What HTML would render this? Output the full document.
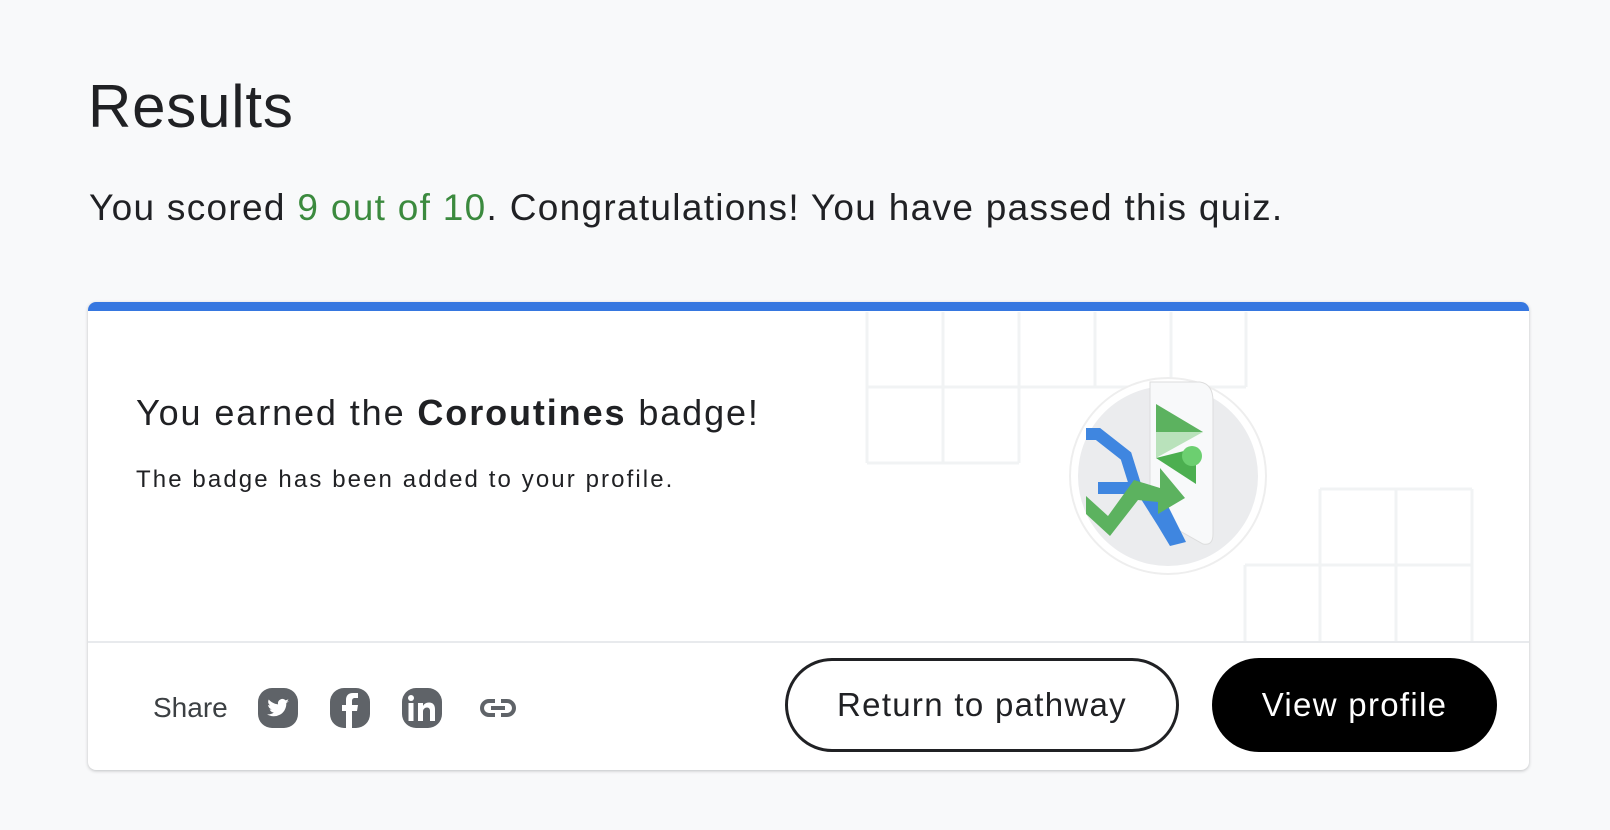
<!DOCTYPE html>
<html><head><style>
body{margin:0;width:1610px;height:830px;background:#f8f9fa;font-family:"Liberation Sans",sans-serif;color:#202124;position:relative;overflow:hidden}
.abs{position:absolute}
h1{position:absolute;left:88px;top:72px;margin:0;font-size:60px;font-weight:400;letter-spacing:0.8px}
.score{position:absolute;left:89px;top:187px;font-size:37px;white-space:nowrap;letter-spacing:1.3px}
.score b{color:#3b8a3e;font-weight:400}
.card{position:absolute;left:88px;top:302px;width:1441px;height:468px;background:#fff;border-radius:8px;box-shadow:0 1px 3px rgba(60,64,67,.3);overflow:hidden}
.bar{position:absolute;left:0;top:0;width:100%;height:9px;background:#3677e0}
.t1{position:absolute;left:48px;top:90px;font-size:36px;white-space:nowrap;letter-spacing:1.9px}
.t2{position:absolute;left:48px;top:164px;font-size:24px;white-space:nowrap;letter-spacing:2.1px}
.div{position:absolute;left:0;top:339px;width:100%;height:2px;background:#e8eaed}
.share{position:absolute;left:65px;top:390px;font-size:28px;color:#3c4043}
.btn{position:absolute;top:356px;height:94px;border-radius:47px;box-sizing:border-box;font-size:33px;display:flex;align-items:center;justify-content:center;letter-spacing:1.3px}
</style></head><body>
<h1>Results</h1>
<div class="score">You scored <b>9 out of 10</b>. Congratulations! You have passed this quiz.</div>
<div class="card">
<svg class="abs" style="left:0;top:0" width="1441" height="468" fill="none" stroke="#f1f3f4" stroke-width="3">
<path d="M779 10V161M855 10V161M931 10V161M1007 10V85M1083 10V85M1158 10V85M779 85H1158M779 161H931"/>
<path d="M1232 187V339M1308 187V339M1384 187V339M1157 263V339M1232 187H1384M1157 263H1384"/>
</svg>
<div class="bar"></div>
<div class="t1">You earned the <b style="font-weight:600">Coroutines</b> badge!</div>
<div class="t2">The badge has been added to your profile.</div>
<svg class="abs" style="left:980px;top:74px" width="200" height="200" viewBox="0 0 200 200">
<circle cx="100" cy="100" r="98" fill="#fff" stroke="#eee" stroke-width="2"/>
<circle cx="100" cy="100" r="90" fill="#ebecee"/>
<path d="M82 6 L132 6 Q145 8 145 25 L145 158 Q145 170 135 168 L82 138 Z" fill="#f8f9fa" stroke="#ddd"/>
<path d="M88 28 L135 56 L88 70 Z" fill="#5cb25f"/>
<path d="M88 56 L135 56 L88 82 Z" fill="#b9e2bb"/>
<path d="M88 82 L128 72 L128 108 Z" fill="#4caf50"/>
<circle cx="124" cy="80" r="10" fill="#6ccf70"/>
<path d="M18 58 L30 58 L58 80 L68 112 L30 112" fill="none" stroke="#3f86e0" stroke-width="12"/>
<path d="M66 112 L90 150 L102 170 L118 166 L100 130" fill="#3f86e0"/>
<path d="M18 120 L40 140 L66 104 L92 112 L92 92 L117 122 L90 138 L90 126 L70 124 L42 160 L18 138 Z" fill="#5cb25f"/>
</svg>
<div class="div"></div>
<div class="share">Share</div>
<svg class="abs" style="left:170px;top:386px" width="40" height="40" viewBox="0 0 40 40"><rect width="40" height="40" rx="14" fill="#5f6368"/><path d="M31 13c-1 .5-1.8.6-2.6.8 1-.6 1.6-1.4 2-2.5-.9.5-1.8.9-2.8 1.1a4.4 4.4 0 0 0-7.5 4C16.500 16 13 14.200 10.800 11.500c-1.200 2-.6 4.600 1.400 5.900-.7 0-1.400-.2-2-.5 0 2.100 1.500 4 3.500 4.400-.6.200-1.300.200-2 .1.600 1.800 2.200 3 4.100 3.100A8.800 8.800 0 0 1 9 26.300 12.500 12.500 0 0 0 28.300 15.800V15c.9-.6 1.800-1.200 2.700-2z" fill="#fff"/></svg>
<svg class="abs" style="left:242px;top:386px" width="40" height="40" viewBox="0 0 40 40"><rect width="40" height="40" rx="14" fill="#5f6368"/><path d="M22 40V23h5l1-6h-6v-4c0-2 1-3 3-3h3V5h-5c-5 0-7 3-7 7v5h-4v6h4v17z" fill="#fff"/></svg>
<svg class="abs" style="left:314px;top:386px" width="40" height="40" viewBox="0 0 40 40"><rect width="40" height="40" rx="14" fill="#5f6368"/><circle cx="9" cy="10" r="3" fill="#fff"/><rect x="6.500" y="15" width="5" height="18" fill="#fff"/><path d="M16 15h5v3c1-2 3-3.500 6-3.500 4 0 6 2.500 6 7V33h-5V23c0-2-1-3.500-3-3.500s-4 1.500-4 4V33h-5z" fill="#fff"/></svg>
<svg class="abs" style="left:390px;top:388px" width="40" height="36" viewBox="0 0 40 36"><path d="M17 11h-6a7 7 0 0 0 0 14h6M23 11h6a7 7 0 0 1 0 14h-6M13 18h14" fill="none" stroke="#5f6368" stroke-width="4"/></svg>
<div class="btn" style="left:697px;width:394px;border:3px solid #202124;color:#202124">Return to pathway</div>
<div class="btn" style="left:1124px;width:285px;background:#000;color:#fff">View profile</div>
</div>
</body></html>
